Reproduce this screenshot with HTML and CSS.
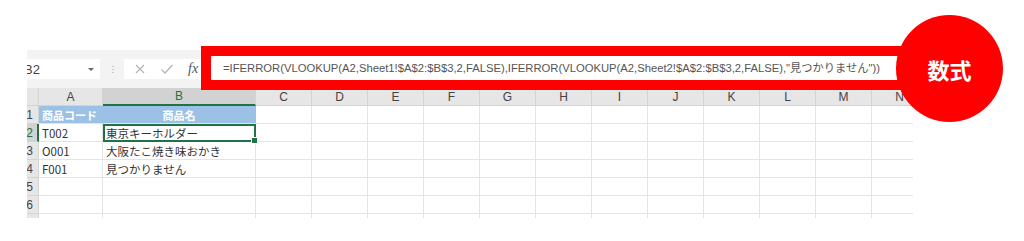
FILE: index.html
```html
<!DOCTYPE html>
<html lang="ja">
<head>
    <meta charset="UTF-8">
    <title>IFERROR VLOOKUP 数式</title>
    <link rel="stylesheet" href="styles.css">
</head>
<body>

    <div class="stage">
        <div class="sheet">
            <!-- formula bar -->
            <div class="toolbar">
                <div class="namebox">
                    <span>B2</span>
                    <span class="caret"></span>
                </div>
                <div class="grip"></div>
                <div class="fxbox">
                    <svg width="12" height="12" viewBox="0 0 12 12"><path d="M2 2 L10 10 M10 2 L2 10" stroke="#b5b5b5" stroke-width="1.2" fill="none"/></svg>
                    <svg width="14" height="12" viewBox="0 0 14 12"><path d="M1.5 6.5 L5 10 L12.5 2" stroke="#b5b5b5" stroke-width="1.3" fill="none"/></svg>
                    <span class="fx">fx</span>
                </div>
                <div class="formula">=IFERROR(VLOOKUP(A2,Sheet1!$A$2:$B$3,2,FALSE),IFERROR(VLOOKUP(A2,Sheet2!$A$2:$B$3,2,FALSE),"見つかりません"))</div>
            </div>

            <!-- cells -->
            <div class="grid">
                <div class="corner"></div>
                <div class="colhead">A</div>
                <div class="colhead active">B</div>
                <div class="colhead">C</div>
                <div class="colhead">D</div>
                <div class="colhead">E</div>
                <div class="colhead">F</div>
                <div class="colhead">G</div>
                <div class="colhead">H</div>
                <div class="colhead">I</div>
                <div class="colhead">J</div>
                <div class="colhead">K</div>
                <div class="colhead">L</div>
                <div class="colhead">M</div>
                <div class="colhead">N</div>

                <div class="rowhead">1</div>
                <div class="cell title">商品コード</div>
                <div class="cell title center">商品名</div>
                <div class="cell"></div><div class="cell"></div><div class="cell"></div><div class="cell"></div><div class="cell"></div><div class="cell"></div><div class="cell"></div><div class="cell"></div><div class="cell"></div><div class="cell"></div><div class="cell"></div><div class="cell"></div>

                <div class="rowhead active">2</div>
                <div class="cell">T002</div>
                <div class="cell selected">東京キーホルダー</div>
                <div class="cell"></div><div class="cell"></div><div class="cell"></div><div class="cell"></div><div class="cell"></div><div class="cell"></div><div class="cell"></div><div class="cell"></div><div class="cell"></div><div class="cell"></div><div class="cell"></div><div class="cell"></div>

                <div class="rowhead">3</div>
                <div class="cell">O001</div>
                <div class="cell">大阪たこ焼き味おかき</div>
                <div class="cell"></div><div class="cell"></div><div class="cell"></div><div class="cell"></div><div class="cell"></div><div class="cell"></div><div class="cell"></div><div class="cell"></div><div class="cell"></div><div class="cell"></div><div class="cell"></div><div class="cell"></div>

                <div class="rowhead">4</div>
                <div class="cell">F001</div>
                <div class="cell">見つかりません</div>
                <div class="cell"></div><div class="cell"></div><div class="cell"></div><div class="cell"></div><div class="cell"></div><div class="cell"></div><div class="cell"></div><div class="cell"></div><div class="cell"></div><div class="cell"></div><div class="cell"></div><div class="cell"></div>

                <div class="rowhead">5</div>
                <div class="cell"></div><div class="cell"></div>
                <div class="cell"></div><div class="cell"></div><div class="cell"></div><div class="cell"></div><div class="cell"></div><div class="cell"></div><div class="cell"></div><div class="cell"></div><div class="cell"></div><div class="cell"></div><div class="cell"></div><div class="cell"></div>

                <div class="rowhead">6</div>
                <div class="cell"></div><div class="cell"></div>
                <div class="cell"></div><div class="cell"></div><div class="cell"></div><div class="cell"></div><div class="cell"></div><div class="cell"></div><div class="cell"></div><div class="cell"></div><div class="cell"></div><div class="cell"></div><div class="cell"></div><div class="cell"></div>

                <div class="rowhead"></div>
                <div class="cell"></div><div class="cell"></div>
                <div class="cell"></div><div class="cell"></div><div class="cell"></div><div class="cell"></div><div class="cell"></div><div class="cell"></div><div class="cell"></div><div class="cell"></div><div class="cell"></div><div class="cell"></div><div class="cell"></div><div class="cell"></div>
            </div>
        </div>

        <!-- callouts -->
        <div class="highlight"></div>
        <div class="badge">数式</div>
    </div>

</body>
</html>
```

FILE: styles.css
```css
body {
    margin: 0;
    background-color: #ffffff;
    font-family: 'Liberation Sans', 'Noto Sans CJK JP', sans-serif;
}

.stage {
    position: relative;
    padding: 50px 0 0 27px;
}

.sheet {
    width: 886px;
    height: 168px;
    overflow: hidden;
    background-color: #f3f3f3;
}

/* formula bar */
.toolbar {
    height: 38px;
    display: flex;
    align-items: flex-start;
}

.namebox {
    margin: 9px 0 0 -6px;
    width: 70px;
    height: 20px;
    padding: 0 6px 0 3px;
    background-color: #ffffff;
    display: flex;
    align-items: center;
    justify-content: space-between;
    font-size: 13px;
    color: #444;
}

.caret {
    width: 0;
    height: 0;
    border-left: 3px solid transparent;
    border-right: 3px solid transparent;
    border-top: 3px solid #666;
}

.grip {
    margin: 15px 0 0 12px;
    width: 2px;
    height: 10px;
    background-image: radial-gradient(circle, #c8c8c8 0.8px, transparent 1px);
    background-size: 2px 3px;
}

.fxbox {
    margin: 9px 0 0 10px;
    width: 80px;
    height: 20px;
    background-color: #ffffff;
    display: flex;
    align-items: center;
    gap: 14px;
    padding-left: 10px;
}

.fx {
    font-family: 'Liberation Serif', serif;
    font-style: italic;
    font-size: 14px;
    color: #555;
}

.formula {
    margin: 6px 0 0 0;
    flex: 1;
    height: 24px;
    line-height: 24px;
    background-color: #ffffff;
    padding-left: 9px;
    font-size: 11.25px;
    color: #555;
    white-space: nowrap;
    overflow: hidden;
}

/* cells */
.grid {
    margin-left: -12px;
    display: grid;
    grid-template-columns: 24px 64px 153px repeat(12, 56px);
    grid-auto-rows: 18px;
    background-color: #ffffff;
    font-size: 12px;
}

.corner,
.colhead,
.rowhead {
    background-color: #e6e6e6;
    color: #444;
    display: flex;
    align-items: center;
    justify-content: center;
    box-sizing: border-box;
    border-right: 1px solid #d4d4d4;
    border-bottom: 1px solid #d4d4d4;
}

.colhead.active {
    background-color: #d2d2d2;
    color: #217346;
    border-bottom: 2px solid #217346;
}

.rowhead {
    justify-content: flex-end;
    padding-right: 5px;
}

.rowhead.active {
    background-color: #d2d2d2;
    color: #217346;
    border-right: 2px solid #217346;
    padding-right: 4px;
}

.cell {
    box-sizing: border-box;
    border-right: 1px solid #e4e4e4;
    border-bottom: 1px solid #e4e4e4;
    padding-left: 3px;
    display: flex;
    align-items: center;
    white-space: nowrap;
    color: #333;
    font-size: 11.5px;
    font-family: 'Noto Sans CJK JP', sans-serif;
}

.cell.title {
    background-color: #9bc2e6;
    color: #ffffff;
    font-weight: bold;
    font-size: 11px;
    border-right-color: #9bc2e6;
}

.cell.center {
    justify-content: center;
    padding-left: 0;
}

.cell.selected {
    position: relative;
    border: 2px solid #217346;
    padding-left: 1px;
}

.cell.selected::after {
    content: '';
    position: absolute;
    right: -4px;
    bottom: -4px;
    width: 5px;
    height: 5px;
    background-color: #217346;
    border: 1px solid #ffffff;
}

/* callouts */
.highlight {
    position: absolute;
    left: 201px;
    top: 46px;
    width: 690px;
    height: 24px;
    border: 10px solid #ff0000;
}

.badge {
    position: absolute;
    left: 896px;
    top: 15px;
    width: 107px;
    height: 107px;
    border-radius: 50%;
    background-color: #ff0000;
    color: #ffffff;
    font-family: 'Noto Sans CJK JP', sans-serif;
    font-weight: bold;
    font-size: 22px;
    display: flex;
    align-items: center;
    justify-content: center;
}
```
